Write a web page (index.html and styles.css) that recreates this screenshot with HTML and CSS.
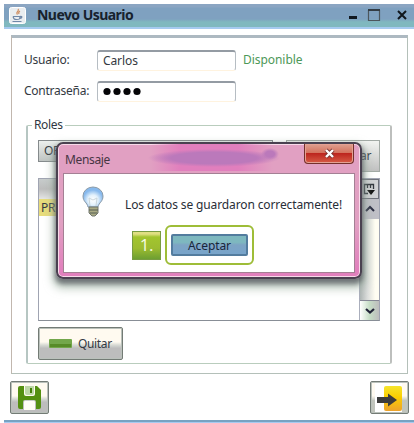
FILE: index.html
```html
<!DOCTYPE html>
<html lang="es">
<head>
<meta charset="utf-8">
<title>Nuevo Usuario</title>
<link rel="stylesheet" href="styles.css">
</head>
<body>
<main class="window">
  <header class="titlebar">
    <svg class="java" width="17" height="17" viewBox="0 0 17 17"><rect x=".5" y=".5" width="16" height="16" rx="2" fill="#e9edf0" stroke="#fff"/><path d="M9 2c2 2-3 3-.5 5.500M11 4c-2 1-1.500 2-1 3" fill="none" stroke="#cf8f63" stroke-width="1.200"/><path d="M4 9.500h7c0 3-1 3-3.500 3S5 12 4 9.500M11 9.500c3-.5 2 2-.5 2M3.500 14.500h9" fill="none" stroke="#7088a8" stroke-width="1.200"/></svg>
    <h1>Nuevo Usuario</h1>
    <svg class="controls" width="60" height="14" viewBox="0 0 60 14"><path d="M1 9.500h8" stroke="#111820" stroke-width="3"/><path d="M20.500 2.500h11v10h-11z" fill="none" stroke="#4c565c" stroke-width="1.200"/><path d="M20 2h12" stroke="#333c44" stroke-width="2"/><path d="M50 3l8 8M58 3l-8 8" stroke="#10161c" stroke-width="2"/></svg>
  </header>

  <section class="panel">
    <div class="row"><label>Usuario:</label><div class="field"><span class="carlos">Carlos</span></div><span class="available">Disponible</span></div>
    <div class="row"><label class="pass">Contraseña:</label><div class="field"><svg width="38" height="9" viewBox="0 0 38 9"><circle cx="4" cy="4.500" r="3.600"/><circle cx="14" cy="4.500" r="3.600"/><circle cx="24" cy="4.500" r="3.600"/><circle cx="34" cy="4.500" r="3.600"/></svg></div></div>
    <div class="roles">
      <span class="legend">Roles</span>
      <div class="tools"><div class="combo">OP</div><div class="add">Agregar</div></div>
      <div class="table">
        <div class="rows"><div class="thead"></div><div class="selected">PR</div></div>
        <div class="scroll">
          <div class="columns"><svg width="13" height="13" viewBox="0 0 13 13"><path d="M5 10.500H1.500v-9h9V6M4.500 1v4M7.500 1v4" fill="none" stroke="#30343c" stroke-width="1.300"/><path d="M4 7h8l-4 5z" fill="#111"/></svg></div>
          <div class="arrow up"><svg width="10" height="8" viewBox="0 0 10 8"><path d="M1 6l4-4 4 4" fill="none" stroke="#292b40" stroke-width="2"/></svg></div>
          <div class="track"></div>
          <div class="arrow down"><svg width="10" height="8" viewBox="0 0 10 8"><path d="M1 2l4 3.500L9 2" fill="none" stroke="#222438" stroke-width="2.200"/></svg></div>
        </div>
      </div>
      <div class="button remove"><svg width="23" height="9" viewBox="0 0 23 9"><rect width="23" height="9" rx="1" fill="#73a74b"/><path d="M1 5h21v3H1z" fill="#578b28"/></svg><span>Quitar</span></div>
    </div>
  </section>

  <footer class="actions">
    <div class="button save"><svg width="25" height="26" viewBox="0 0 25 26"><path d="M3 1h4v8q0 2 2 2h7q2 0 2-2V1h2l4 4v17q0 2-2 2h-3v-7q0-2-2-2H8q-2 0-2 2v7H3q-2 0-2-2V3q0-2 2-2z" fill="#549010"/><path d="M8 1h9v7q0 2-2 2h-5q-2 0-2-2z" fill="#bdd7a6"/><path d="M13 3h2v5h-2z" fill="#458108"/><path d="M7 17q0-1 1-1h9q1 0 1 1v8H7z" fill="#fffdf4"/></svg></div>
    <div class="button exit"><svg width="27" height="28" viewBox="0 0 27 28"><defs><linearGradient id="door" x2="0" y2="1"><stop stop-color="#f5e52c"/><stop offset=".45" stop-color="#fbce00"/><stop offset="1" stop-color="#eca22d"/></linearGradient></defs><rect x="8" y="2" width="18" height="25" rx="2" fill="url(#door)"/><path d="M1 13h11V9.500l9 6.500-9 6.500V19H1z" fill="#3c3c3c"/></svg></div>
  </footer>

  <section class="dialog">
    <header class="dialog-bar"><h2>Mensaje</h2><div class="close"><svg width="11" height="11" viewBox="0 0 11 11"><path d="M2 2l7 7M9 2L2 9" stroke="#7b3530" stroke-width="4"/><path d="M2 2l7 7M9 2L2 9" stroke="#fff" stroke-width="2.400"/></svg></div></header>
    <div class="dialog-body">
      <div class="message">
        <svg width="24" height="33" viewBox="0 0 24 33"><defs><radialGradient id="glass" cy=".65"><stop stop-color="#fff"/><stop offset=".5" stop-color="#e4f2fc"/><stop offset="1" stop-color="#87b9ed"/></radialGradient></defs><path d="M7 21C6 16 2 16 2 10a10 9 0 0120 0c0 6-4 6-5 11z" fill="url(#glass)" stroke="#8b9ba8"/><path d="M9 20l-1-8 4 2 4-2-1 8" fill="none" stroke="#cbd7dc"/><path d="M8 21h9v6l-3 3h-3l-3-3z" fill="#a9aa84" stroke="#71776e"/><path d="M8 24h9M9 27h7" stroke="#565e54"/></svg>
        <p>Los datos se guardaron correctamente!</p>
      </div>
      <div class="choices"><span class="step">1.</span><div class="highlight"><div class="accept">Aceptar</div></div></div>
    </div>
  </section>
</main>
</body>
</html>
```
FILE: styles.css
```css
* { box-sizing: border-box; }
body { margin: 0; background: #fff; font: 12px/16px "Noto Sans", "Open Sans", sans-serif; color: #333942; letter-spacing: -.35px; overflow: hidden; }
h1, h2, p { margin: 0; font-weight: 400; }
svg { display: block; flex: none; }
.window { position: relative; width: 414px; height: 423px; padding: 4px 0 0 4px; display: flex; flex-direction: column; }
.titlebar { height: 25px; flex: none; display: flex; align-items: center; padding: 0 6px 3px 5px; background: linear-gradient(#8ba5c2 0 3px, #7fa1c0 4px 15px, #80b8bf 18px 23px, #a6caf0 23px); }
.titlebar h1 { font-size: 14px; font-weight: 700; margin-left: 11px; color: #17222d; letter-spacing: -.55px; white-space: nowrap; }
.controls { margin-left: auto; }
.panel { width: 397px; height: 339px; flex: none; margin: 6px 0 0 7px; padding: 11px 15px 0 11px; border: 1px solid #b4c0b9; border-left-color: #c1b7ae; border-top: 3px solid #adb9c1; }
.row { height: 22px; display: flex; align-items: center; margin-bottom: 9px; }
.row label { width: 74px; padding-left: 1px; letter-spacing: -.2px; white-space: nowrap; }
.row .pass { letter-spacing: -.25px; }
.field { width: 139px; height: 21px; padding-left: 5px; display: flex; align-items: center; border: 1px solid #b6bdc3; border-top: 2px solid #949ba3; border-bottom-color: #fff3df; border-radius: 3px; }
.field svg { fill: #050508; }
.carlos { letter-spacing: -.1px; }
.available { margin-left: 7px; color: #4d9858; letter-spacing: -.05px; }
.roles { position: relative; width: 366px; height: 239px; margin: 23px 0 0 3px; padding: 14px 10px 0; border: 1px solid #b9cdbd; border-left: 2px solid #b6c6c2; border-right: 2px solid #bdbfbd; border-radius: 2px; }
.legend { position: absolute; left: 4px; top: -9px; padding: 0 2px; background: #fff; color: #303742; }
.tools { display: flex; justify-content: space-between; height: 38px; }
.combo { width: 235px; height: 22px; padding: 2px 5px; border: 1px solid #858a8c; background: linear-gradient(#ecefed, #bfc4c2); }
.add { width: 94px; height: 32px; padding: 7px 8px; text-align: right; border: 1px solid #a2aaa5; background: linear-gradient(#f2f4f1, #c0c0c0); }
.table { height: 143px; display: flex; border: 1px solid #a0a4b2; border-bottom-color: #888e96; }
.rows { flex: 1; }
.thead { height: 20px; background: linear-gradient(#c7cccc, #bdbdbd 50%, #e5e5e5); }
.selected { width: 30px; height: 17px; padding-left: 2px; line-height: 18px; background: #e8dc7b; }
.scroll { width: 20px; display: flex; flex-direction: column; border-left: 1px solid #aaaebc; }
.columns { height: 20px; display: grid; place-items: center; border: 1px solid #6f727b; background: #d1d2d5; }
.arrow { height: 20px; display: grid; place-items: center; }
.up { background: #bfbfc6; }
.track { flex: 1; background: linear-gradient(90deg, #aeb5b4, #dcdedc 40%, #fffdf2 80%); }
.down { border-top: 1px solid #858795; background: linear-gradient(90deg, #fff, #c6ddc6, #bdbdbd); }
.button { border: 1px solid #737b75; border-radius: 2px; box-shadow: inset 0 0 0 1px #bac1bb; background: linear-gradient(#fffaf0 0 45%, #d7dad4 55%, #bdbdbd 65%); }
.remove { width: 85px; height: 33px; margin-top: 6px; display: flex; align-items: center; gap: 6px; padding-left: 10px; }
.actions { display: flex; justify-content: space-between; padding: 7px 5px 0 6px; height: 46px; flex: none; }
.save, .exit { width: 39px; height: 33px; display: grid; place-items: center; }
.exit { background: linear-gradient(90deg, transparent 12%, #fff 12% 84%, transparent 84%), linear-gradient(#fffaf0 45%, #c1c5bd 60%); }
.window::after { content: ""; height: 2px; background: #77a2c2; border-bottom: 1px solid #a6caf0; }
.dialog { position: absolute; left: 56px; top: 142px; width: 306px; height: 137px; padding: 2px 6px 6px; border: 2px solid #4a4150; border-radius: 7px; box-shadow: inset 0 0 0 1px #f8dae9, 0 4px 5px 1px rgba(64,66,76,.65), 0 6px 8px 4px rgba(158,180,164,.6); background: linear-gradient(#e1a0c2 60%, #e180bd 95%); }
.dialog-bar { height: 27px; margin: -2px 0 0; display: flex; justify-content: space-between; background: radial-gradient(ellipse 9px 6px at 206px 10px, #bb79bb 50%, transparent), radial-gradient(ellipse 66px 9px at 150px 14px, #bb79bb 65%, transparent), linear-gradient(90deg, transparent 30%, #e17fbd 40% 60%, transparent 72%); }
.dialog-bar h2 { font-size: 12px; line-height: 32px; padding-left: 1px; color: #463543; }
.close { width: 50px; height: 20px; display: grid; place-items: center; border: 1px solid #74302c; border-top: 0; border-radius: 0 0 4px 4px; box-shadow: inset 0 0 0 1px #e4a193; background: linear-gradient(#dfa090, #d4745f 45%, #bd261e 50%, #d65c46); }
.dialog-body { height: 100px; margin: 2px -1px 0 -1px; padding: 12px 5px 0 17px; border: 1px solid #a48094; background: #fff; }
.message { display: flex; height: 35px; }
.message p { margin: 11px 0 0 20px; font-size: 12px; white-space: nowrap; letter-spacing: -.12px; color: #292e37; }
.choices { display: flex; align-items: center; margin: 4px 0 0 51px; gap: 4px; }
.step { width: 29px; height: 29px; border: 1px solid #789c42; background: linear-gradient(#e0df82 0 2px, #a2c52e 5px, #9dbc30 60%, #6d9f31); color: #f7fbe4; font: 17px/26px "Open Sans", sans-serif; text-align: center; }
.highlight { width: 89px; height: 40px; padding: 7px 4px; border: 2px solid #9ebd38; border-radius: 6px; }
.accept { width: 77px; height: 22px; line-height: 19px; text-align: center; color: #17273a; letter-spacing: -.1px; border: 2px solid #537c9e; border-radius: 2px; background: linear-gradient(#7eb8bf 0 35%, #7da4c4 50%, #78a4ca); }
```
